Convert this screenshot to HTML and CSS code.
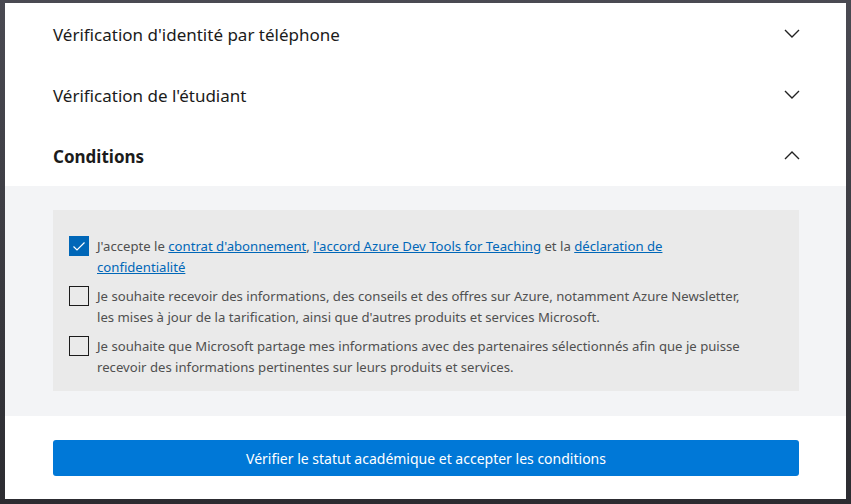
FILE: index.html
```html
<!DOCTYPE html>
<html>
<head>
    <meta charset="utf-8">
    <title>Conditions</title>
    <link rel="stylesheet" href="styles.css">
</head>
<body>
    <div class="panel">
        <div class="section">
            <span class="section-title">Vérification d'identité par téléphone</span>
            <svg class="chevron" width="16" height="9" viewBox="0 0 16 9"><path d="M1 1 L8 8 L15 1" /></svg>
        </div>
        <div class="section">
            <span class="section-title">Vérification de l'étudiant</span>
            <svg class="chevron" width="16" height="9" viewBox="0 0 16 9"><path d="M1 1 L8 8 L15 1" /></svg>
        </div>
        <div class="section open">
            <span class="section-title">Conditions</span>
            <svg class="chevron" width="16" height="9" viewBox="0 0 16 9"><path d="M1 8 L8 1 L15 8" /></svg>
        </div>
        <div class="terms">
            <div class="terms-box">
                <label class="check-row">
                    <span class="box checked">
                        <svg width="20" height="20" viewBox="0 0 20 20"><path d="M4.5 10.5 L8 14 L15.5 6.5" /></svg>
                    </span>
                    <span class="check-text">J'accepte le <a href="#">contrat d'abonnement</a>, <a href="#">l'accord Azure Dev Tools for Teaching</a> et la <a href="#">déclaration de confidentialité</a></span>
                </label>
                <label class="check-row">
                    <span class="box"></span>
                    <span class="check-text">Je souhaite recevoir des informations, des conseils et des offres sur Azure, notamment Azure Newsletter, les mises à jour de la tarification, ainsi que d'autres produits et services Microsoft.</span>
                </label>
                <label class="check-row">
                    <span class="box"></span>
                    <span class="check-text">Je souhaite que Microsoft partage mes informations avec des partenaires sélectionnés afin que je puisse recevoir des informations pertinentes sur leurs produits et services.</span>
                </label>
            </div>
        </div>
        <div class="actions">
            <button class="submit">Vérifier le statut académique et accepter les conditions</button>
        </div>
    </div>
</body>
</html>
```

FILE: styles.css
```css
html, body { margin: 0; height: 100%; }
body { background: linear-gradient(180deg, #4a4a52 0%, #2c2c31 100%); font-family: "Noto Sans", "Open Sans", sans-serif; padding: 3px 5px 5px 5px; box-sizing: border-box; }
.panel { background: #fff; width: 841px; height: 496px; display: flex; flex-direction: column; }
.section { height: 61px; display: flex; align-items: center; justify-content: space-between; padding: 2px 46px 0 48px; box-sizing: border-box; }
.section-title { font-size: 17px; color: #1b1b1b; }
.section.open .section-title { font-weight: 700; }
.chevron { margin-top: -2px; }
.chevron path { fill: none; stroke: #222; stroke-width: 1.4; }
.terms { background: #f3f4f6; padding: 24px 47px 25px 48px; }
.terms-box { background: #eaeaea; padding: 26px 16px 13px 16px; }
.check-row { display: flex; align-items: flex-start; gap: 8px; margin-bottom: 8px; font-size: 13.15px; line-height: 21px; color: #505050; }
.check-row:last-child { margin-bottom: 0; }
.box { flex: none; width: 18px; height: 18px; border: 1px solid #1b1b1b; }
.box.checked { background: #0067b8; border-color: #0067b8; }
.box svg { display: block; margin: -1px; }
.box path { fill: none; stroke: #fff; stroke-width: 1.2; }
.check-text { max-width: 650px; }
.check-text a { color: #0067b8; text-decoration: underline; }
.actions { padding: 24px 47px 0 48px; }
.submit { display: block; width: 100%; height: 36px; background: #0078d7; color: #fff; border: none; border-radius: 3px; font-family: "Noto Sans", sans-serif; font-size: 14px; }
```
